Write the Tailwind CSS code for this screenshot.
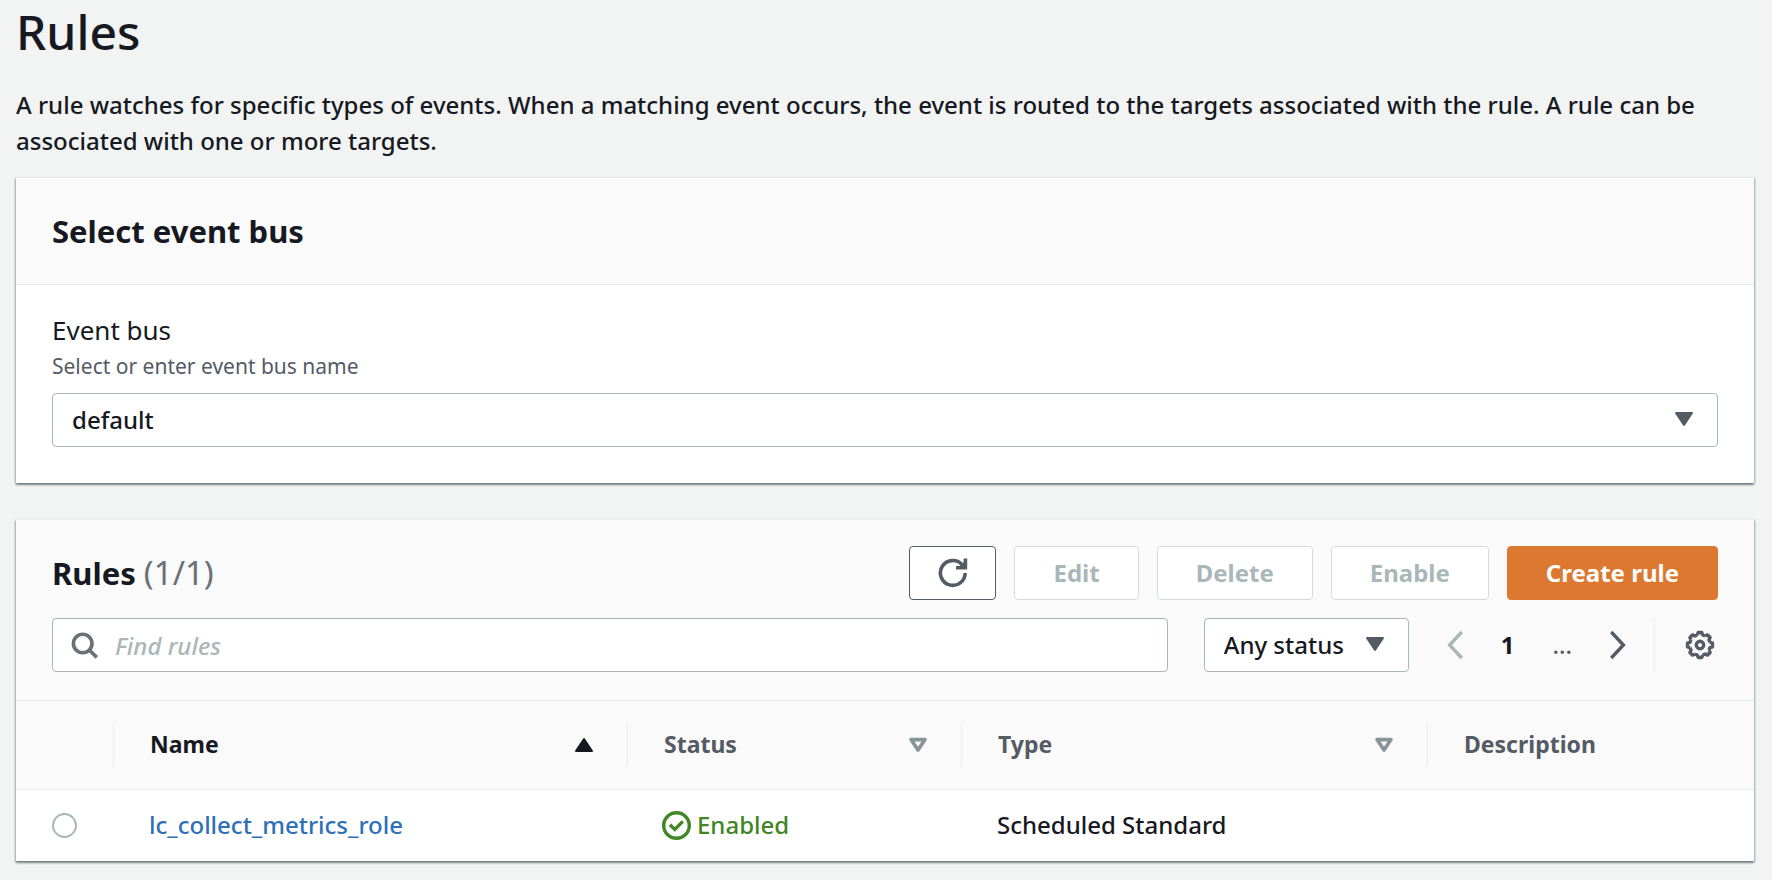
<!DOCTYPE html>
<html lang="en">
<head>
<meta charset="utf-8">
<meta name="viewport" content="width=device-width, initial-scale=1">
<title>Rules</title>
<script src="https://cdn.jsdelivr.net/npm/@tailwindcss/browser@4"></script>
</head>
<body class="min-h-screen bg-[#f2f3f3] pt-1 pr-[18px] pl-4 font-['Noto_Sans',sans-serif] text-2xl font-medium text-[#16191f]">
<main class="flex flex-col">
  <h1 class="text-[48px] leading-[56px] font-medium">Rules</h1>
  <p class="mt-[27px] leading-9">A rule watches for specific types of events. When a matching event occurs, the event is routed to the targets associated with the rule. A rule can be associated with one or more targets.</p>

  <section class="mt-[18px] border-t border-[#eaeded] bg-white shadow-[0_2px_2px_0_rgba(0,28,36,0.4),1px_1px_2px_0_rgba(0,28,36,0.2),-1px_1px_2px_0_rgba(0,28,36,0.2)]">
    <header class="flex h-[107px] items-center border-b border-[#eaeded] bg-[#fafafa] px-9">
      <h2 class="text-[31px] leading-9 font-bold">Select event bus</h2>
    </header>
    <div class="flex flex-col px-9 pt-[27px] pb-9">
      <label for="bus" class="text-[26px] leading-9 font-normal">Event bus</label>
      <span id="bus-hint" class="text-[21px] leading-9 font-normal text-[#545b64]">Select or enter event bus name</span>
      <div class="relative mt-[9px]">
        <select id="bus" aria-describedby="bus-hint" class="h-[54px] w-full appearance-none rounded border border-[#aab7b8] bg-white px-[19px]">
          <option>default</option>
        </select>
        <svg class="pointer-events-none absolute top-[18px] right-6 h-4 w-5" viewBox="0 0 20 16" fill="#545b64" stroke="#545b64" stroke-width="2" stroke-linejoin="round"><path d="M2 2h16l-8 12z"/></svg>
      </div>
    </div>
  </section>

  <section class="mt-9 border-t border-[#eaeded] bg-[#fafafa] shadow-[0_2px_2px_0_rgba(0,28,36,0.4),1px_1px_2px_0_rgba(0,28,36,0.2),-1px_1px_2px_0_rgba(0,28,36,0.2)]">
    <div class="flex flex-col gap-[18px] border-b border-[#eaeded] px-9 pt-[26px] pb-7">
      <div class="flex items-center gap-[18px]">
        <h2 class="mr-auto text-[31px] leading-9 font-bold">Rules <span class="text-[33px] font-normal text-[#687078]">(1/1)</span></h2>
        <button type="button" aria-label="Refresh" class="flex h-[54px] w-[87px] items-center justify-center rounded border border-[#545b64] bg-white">
          <svg class="h-[30px] w-[30px]" viewBox="0 0 30 30" fill="none" stroke="#545b64" stroke-width="3.6"><path d="M27.2 15A12.4 12.4 0 1 1 23.8 6.4L27 9.4"/><path d="M27.4 .6v9.2H18" /><path d="M22 8l5-5v6z" fill="#545b64" stroke="none"/></svg>
        </button>
        <button type="button" disabled class="h-[54px] rounded border border-[#d5dbdb] bg-white px-[38px] font-bold text-[#aab7b8]">Edit</button>
        <button type="button" disabled class="h-[54px] rounded border border-[#d5dbdb] bg-white px-[38px] font-bold text-[#aab7b8]">Delete</button>
        <button type="button" disabled class="h-[54px] rounded border border-[#d5dbdb] bg-white px-[38px] font-bold text-[#aab7b8]">Enable</button>
        <button type="button" class="h-[54px] rounded border border-[#dd7831] bg-[#dd7831] px-[38px] font-bold text-white">Create rule</button>
      </div>
      <div class="flex items-center">
        <div class="relative flex-1">
          <svg class="pointer-events-none absolute top-[13px] left-[19px] h-7 w-7" viewBox="0 0 28 28" fill="none" stroke="#687078" stroke-width="3.6"><circle cx="11.7" cy="12.5" r="9.3"/><path d="M18.2 19l7.6 7.4"/></svg>
          <input type="search" aria-label="Find rules" placeholder="Find rules" class="h-[54px] w-full rounded border border-[#aab7b8] bg-white pr-4 pl-[62px] placeholder:text-[#aab7b8] placeholder:italic">
        </div>
        <div class="relative ml-9">
          <select aria-label="Status filter" class="h-[54px] w-[205px] appearance-none rounded border border-[#aab7b8] bg-white px-[19px]">
            <option>Any status</option>
          </select>
          <svg class="pointer-events-none absolute top-[18px] right-6 h-4 w-5" viewBox="0 0 20 16" fill="#545b64" stroke="#545b64" stroke-width="2" stroke-linejoin="round"><path d="M2 2h16l-8 12z"/></svg>
        </div>
        <nav aria-label="Pagination" class="ml-[38px] flex items-center gap-[38px]">
          <button type="button" disabled aria-label="Previous page"><svg class="h-8 w-4" viewBox="0 0 16 32" fill="none" stroke="#aab7b8" stroke-width="3.4"><path d="M14.8 3L2.6 16l12.2 13"/></svg></button>
          <button type="button" class="font-bold">1</button>
          <span class="text-[#545b64]">...</span>
          <button type="button" aria-label="Next page"><svg class="h-8 w-4" viewBox="0 0 16 32" fill="none" stroke="#545b64" stroke-width="3.4"><path d="M1.2 3l12.2 13L1.2 29"/></svg></button>
        </nav>
        <div class="ml-7 flex h-[54px] items-center border-l border-[#eaeded] pr-[3px] pl-[30px]">
          <button type="button" aria-label="Preferences"><svg class="h-[30px] w-[30px]" viewBox="-15 -15 30 30" fill="none" stroke="#545b64" stroke-width="3.4" stroke-linejoin="round"><defs><path id="tooth" d="M-2.7-10L-1.8-12.5H1.8L2.7-10L5.16-8.98"/></defs><use href="#tooth"/><use href="#tooth" transform="rotate(45)"/><use href="#tooth" transform="rotate(90)"/><use href="#tooth" transform="rotate(135)"/><use href="#tooth" transform="rotate(180)"/><use href="#tooth" transform="rotate(225)"/><use href="#tooth" transform="rotate(270)"/><use href="#tooth" transform="rotate(315)"/><circle r="3.7"/></svg></button>
        </div>
      </div>
    </div>

    <table class="w-full table-fixed text-left">
      <colgroup><col class="w-[97px]"><col class="w-[514px]"><col class="w-[334px]"><col class="w-[466px]"><col></colgroup>
      <thead>
        <tr class="h-[88px] border-b border-[#eaeded]">
          <td></td>
          <th scope="col" class="p-0 font-bold"><div class="flex h-11 items-center justify-between border-l border-[#eaeded] pr-[33px] pl-9 text-[23px]">Name
            <svg class="h-4 w-5" viewBox="0 0 20 16" fill="#16191f" stroke="#16191f" stroke-width="2" stroke-linejoin="round"><path d="M2 14h16L10 2z"/></svg></div></th>
          <th scope="col" class="p-0 font-bold text-[#545b64]"><div class="flex h-11 items-center justify-between border-l border-[#eaeded] pr-[33px] pl-9 text-[23px]">Status
            <svg class="h-4 w-5" viewBox="0 0 20 16" fill="none" stroke="#879596" stroke-width="3.6" stroke-linejoin="round"><path d="M3 2.6h14L10 13z"/></svg></div></th>
          <th scope="col" class="p-0 font-bold text-[#545b64]"><div class="flex h-11 items-center justify-between border-l border-[#eaeded] pr-[33px] pl-9 text-[23px]">Type
            <svg class="h-4 w-5" viewBox="0 0 20 16" fill="none" stroke="#879596" stroke-width="3.6" stroke-linejoin="round"><path d="M3 2.6h14L10 13z"/></svg></div></th>
          <th scope="col" class="p-0 font-bold text-[#545b64]"><div class="flex h-11 items-center border-l border-[#eaeded] pl-9 text-[23px]">Description</div></th>
        </tr>
      </thead>
      <tbody>
        <tr class="h-[72px] bg-white">
          <td class="pl-9"><input type="radio" name="rule" aria-label="Select lc_collect_metrics_role" class="block h-[25px] w-[25px] appearance-none rounded-full border-2 border-[#aab7b8] bg-white checked:border-8 checked:border-[#2e73b8]"></td>
          <td class="pl-9"><a href="#" class="text-[#2e70b8]">lc_collect_metrics_role</a></td>
          <td class="pl-[35px]"><span class="flex items-center gap-1.5 text-[#3f8624]"><svg class="h-[29px] w-[29px]" viewBox="0 0 29 29" fill="none" stroke="#3f8624" stroke-width="3.4"><circle cx="14.5" cy="14.5" r="12.8"/><path d="M8 13.8l4.8 4.6 8-8"/></svg>Enabled</span></td>
          <td class="pl-9">Scheduled Standard</td>
          <td></td>
        </tr>
      </tbody>
    </table>
  </section>
</main>
</body>
</html>
